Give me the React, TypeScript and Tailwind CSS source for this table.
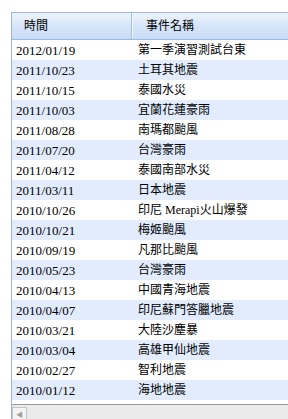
import React from 'react';

// 事件列表資料
const events = [
  { date: '2012/01/19', name: '第一季演習測試台東' },
  { date: '2011/10/23', name: '土耳其地震' },
  { date: '2011/10/15', name: '泰國水災' },
  { date: '2011/10/03', name: '宜蘭花蓮豪雨' },
  { date: '2011/08/28', name: '南瑪都颱風' },
  { date: '2011/07/20', name: '台灣豪雨' },
  { date: '2011/04/12', name: '泰國南部水災' },
  { date: '2011/03/11', name: '日本地震' },
  { date: '2010/10/26', name: '印尼 Merapi火山爆發' },
  { date: '2010/10/21', name: '梅姬颱風' },
  { date: '2010/09/19', name: '凡那比颱風' },
  { date: '2010/05/23', name: '台灣豪雨' },
  { date: '2010/04/13', name: '中國青海地震' },
  { date: '2010/04/07', name: '印尼蘇門答臘地震' },
  { date: '2010/03/21', name: '大陸沙塵暴' },
  { date: '2010/03/04', name: '高雄甲仙地震' },
  { date: '2010/02/27', name: '智利地震' },
  { date: '2010/01/12', name: '海地地震' },
];

export default function App() {
  return (
    <div
      className="w-[288px] h-[419px] overflow-hidden bg-white pl-[11px] pt-[12px]"
      style={{ fontFamily: '"Liberation Serif", "Noto Sans CJK TC", serif' }}
    >
      <div className="w-[320px] border-l border-[#a3b3c6]">
        {/* 表頭 */}
        <div className="flex h-[28px] border-y border-[#99bbe8] bg-gradient-to-b from-[#eef4fc] via-[#d6e5f8] to-[#c9dcf6] text-[12px] text-black">
          <div className="w-[120px] flex items-center pl-[12px] border-r border-[#a9bfd9]">時間</div>
          <div className="flex-1 flex items-center pl-[13px] border-l border-[#eef4fc]">事件名稱</div>
        </div>

        {/* 資料列 */}
        {events.map((ev, i) => (
          <div
            key={ev.date + ev.name}
            className={`flex h-[20px] items-center text-[13px] text-black ${i % 2 === 1 ? 'bg-[#e2ecfd]' : 'bg-white'}`}
          >
            <div className="w-[121px] pl-[4px] leading-none">{ev.date}</div>
            <div className="flex-1 pl-[5px] leading-none text-[12px]">{ev.name}</div>
          </div>
        ))}
        <div className="h-[4px]" />

        {/* 水平捲軸 */}
        <div className="flex h-[20px] border-t border-[#9a9a9a] bg-[#ebebeb]">
          <div className="w-[15px] mt-[2px] border border-[#c4c4c4] bg-[#f3f3f3] flex items-start justify-center pt-[2px] text-[7px] text-[#a0a0a0]">
            ◀
          </div>
          <div className="flex-1" />
        </div>
      </div>
    </div>
  );
}
